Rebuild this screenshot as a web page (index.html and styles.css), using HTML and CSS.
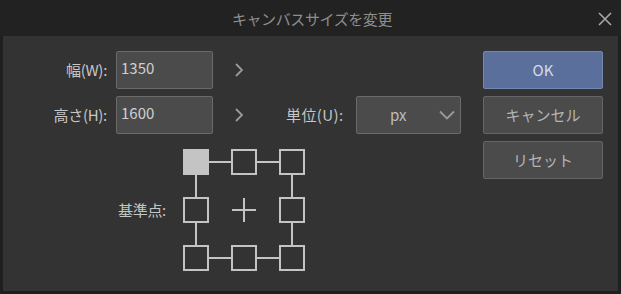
FILE: index.html
```html
<!DOCTYPE html>
<html lang="ja">
<head>
  <meta charset="UTF-8">
  <meta name="viewport" content="width=device-width, initial-scale=1.0">
  <title>キャンバスサイズを変更</title>
  <link rel="stylesheet" href="styles.css">
</head>
<body>
  <div class="dialog">
    <div class="titlebar">
      <span></span>
      <span class="title">キャンバスサイズを変更</span>
      <div class="close-btn" title="閉じる">
        <svg width="14" height="14" viewBox="0 0 14 14">
          <path d="M1 1 L13 13 M13 1 L1 13" stroke="#a8a8a8" stroke-width="1.6" fill="none"/>
        </svg>
      </div>
    </div>
    <div class="panel">
      <div class="form">
        <div class="row">
          <label class="label">幅(W):</label>
          <div class="field">1350</div>
          <div class="chevron">
            <svg width="10" height="16" viewBox="0 0 10 16">
              <path d="M2 2 L8 8 L2 14" stroke="#9a9a9a" stroke-width="1.8" fill="none"/>
            </svg>
          </div>
        </div>
        <div class="row">
          <label class="label">高さ(H):</label>
          <div class="field">1600</div>
          <div class="chevron">
            <svg width="10" height="16" viewBox="0 0 10 16">
              <path d="M2 2 L8 8 L2 14" stroke="#9a9a9a" stroke-width="1.8" fill="none"/>
            </svg>
          </div>
          <label class="label unit-label">単位(U):</label>
          <div class="select">
            <span class="select-value">px</span>
            <svg width="16" height="10" viewBox="0 0 16 10">
              <path d="M1 1.5 L8 8.5 L15 1.5" stroke="#9a9a9a" stroke-width="1.8" fill="none"/>
            </svg>
          </div>
        </div>
        <div class="anchor-row">
          <label class="label anchor-label">基準点:</label>
          <svg class="anchor" width="122" height="122" viewBox="0 0 122 122">
            <g stroke="#c4c4c4" stroke-width="2" fill="none">
              <path d="M25 13 H49 M73 13 H97 M25 109 H49 M73 109 H97 M13 25 V49 M13 73 V97 M109 25 V49 M109 73 V97"/>
              <rect x="1" y="1" width="24" height="24" fill="#c4c4c4"/>
              <rect x="49" y="1" width="24" height="24"/>
              <rect x="97" y="1" width="24" height="24"/>
              <rect x="1" y="49" width="24" height="24"/>
              <rect x="97" y="49" width="24" height="24"/>
              <rect x="1" y="97" width="24" height="24"/>
              <rect x="49" y="97" width="24" height="24"/>
              <rect x="97" y="97" width="24" height="24"/>
              <path d="M49 61 H73 M61 49 V73"/>
            </g>
          </svg>
        </div>
      </div>
      <div class="buttons">
        <div class="btn btn-ok">OK</div>
        <div class="btn">キャンセル</div>
        <div class="btn">リセット</div>
      </div>
    </div>
  </div>
</body>
</html>
```

FILE: styles.css
```css
html, body {
  margin: 0;
  padding: 0;
  background: #1f1f1f;
  font-family: 'Noto Sans CJK JP', 'Noto Sans', sans-serif;
  color: #c6c6c6;
}
.dialog {
  width: 621px;
  height: 294px;
  display: flex;
  flex-direction: column;
}
.titlebar {
  height: 36px;
  display: grid;
  grid-template-columns: 1fr auto 1fr;
  align-items: center;
  background: #222222;
}
.title {
  font-size: 15px;
  letter-spacing: -0.4px;
  color: #8e8e8e;
  padding-left: 3px;
}
.close-btn {
  justify-self: end;
  width: 14px;
  height: 14px;
  margin-right: 9px;
  margin-top: 1px;
  display: flex;
}
.panel {
  height: 255px;
  margin: 0 3px;
  background: #333333;
  display: flex;
  box-sizing: border-box;
  padding-top: 15px;
}
.form {
  flex: 1;
  display: flex;
  flex-direction: column;
  gap: 7px;
}
.row {
  display: flex;
  align-items: center;
  height: 38px;
}
.label {
  width: 104px;
  text-align: right;
  font-size: 15px;
  letter-spacing: -0.3px;
  color: #c6c6c6;
  margin-right: 9px;
  padding-bottom: 2px;
}
.field {
  width: 97px;
  height: 38px;
  box-sizing: border-box;
  background: #4b4b4b;
  border: 1px solid #6a6a6a;
  border-radius: 2px;
  font-size: 15px;
  padding: 5px 0 0 4px;
  line-height: 22px;
  color: #cfcfcf;
}
.chevron {
  margin-left: 21px;
  width: 10px;
  height: 16px;
  display: flex;
}
.unit-label {
  width: 60px;
  text-align: left;
  letter-spacing: 0.4px;
  margin-left: 42px;
  margin-right: 10px;
}
.select {
  width: 105px;
  height: 38px;
  box-sizing: border-box;
  background: #4b4b4b;
  border: 1px solid #6a6a6a;
  border-radius: 2px;
  display: flex;
  align-items: center;
  padding: 0 5px 0 33px;
}
.select-value {
  flex: 1;
  font-size: 15px;
  color: #bdbdbd;
  padding-bottom: 2px;
}
.anchor-row {
  display: flex;
  align-items: center;
  margin-top: 8px;
}
.anchor-label {
  width: 163px;
  margin-right: 16px;
}
.anchor {
  display: block;
  margin-left: 1px;
}
.buttons {
  width: 120px;
  margin-right: 15px;
  display: flex;
  flex-direction: column;
  gap: 7px;
}
.btn {
  height: 38px;
  box-sizing: border-box;
  background: #4b4b4b;
  border: 1px solid #666666;
  border-radius: 2px;
  display: flex;
  align-items: center;
  justify-content: center;
  font-size: 15px;
  color: #b4b4b4;
  padding-bottom: 2px;
}
.btn-ok {
  background: #5a6f9b;
  border-color: #7487ad;
  color: #d6dcea;
}
```
